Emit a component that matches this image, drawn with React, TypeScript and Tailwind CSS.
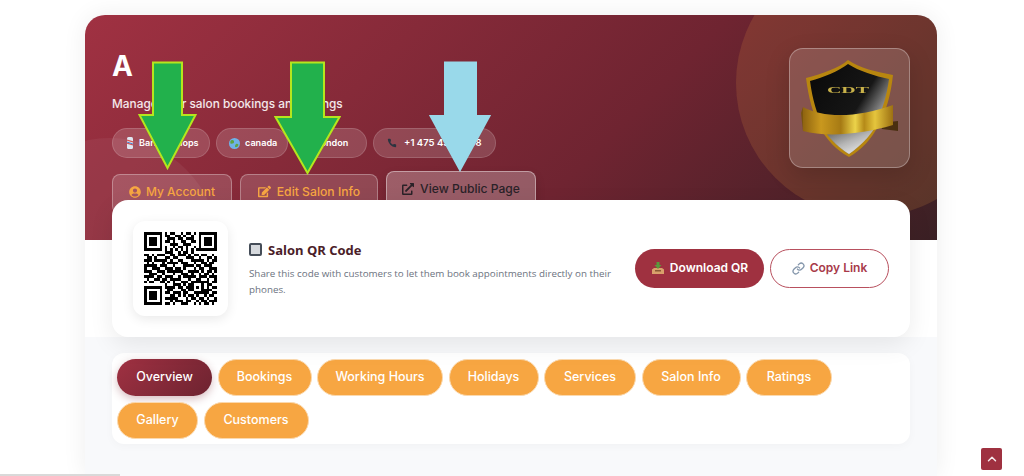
import { FaEdit, FaExternalLinkAlt, FaUserCircle } from 'react-icons/fa';
import { ChevronUp, Link } from 'lucide-react';

const qrRows = [
  '1111111010110010110101111111',
  '1000001011001101001001000001',
  '1011101001110110111001011101',
  '1011101011010011001101011101',
  '1011101000111001110001011101',
  '1000001010010110100101000001',
  '1111111010101010101011111111',
  '0000000011100101101000000000',
  '1101011100110111010110110010',
  '0110100011011000111001001101',
  '1110111110100110001111101011',
  '0101000101111011100100110110',
  '1111101110010001111011011100',
  '1001110011101101000101100111',
  '1110011101111110011110101101',
  '0011100100010011101001011010',
  '1111011011100101111101110111',
  '0100110110111100010011001001',
  '1011001101010011101111111011',
  '0000000010011101011000101100',
  '1111111011110110111010101011',
  '1000001001100011011000111100',
  '1011101011011101100111111011',
  '1011101000110101011010010110',
  '1011101011111000101101101001',
  '1000001000101110110010110111',
  '1111111011010011100101011010',
];

const tabs = [
  { label: 'Overview', width: 'w-[95px]' },
  { label: 'Bookings', width: 'w-[94px]' },
  { label: 'Working Hours', width: 'w-[126px]' },
  { label: 'Holidays', width: 'w-[90px]' },
  { label: 'Services', width: 'w-[92px]' },
  { label: 'Salon Info', width: 'w-[99px]' },
  { label: 'Ratings', width: 'w-[86px]' },
  { label: 'Gallery', width: 'w-[81px]' },
  { label: 'Customers', width: 'w-[105px]' },
];

function QrCode() {
  return (
    <svg width="73" height="73" viewBox="0 0 28 27" preserveAspectRatio="none" shapeRendering="crispEdges">
      {qrRows.map((row, y) =>
        row.split('').map((cell, x) => (cell === '1' ? <rect key={`${x}-${y}`} x={x} y={y} width="1" height="1" fill="#000" /> : null))
      )}
    </svg>
  );
}

function ShieldLogo() {
  return (
    <svg width="119" height="118" viewBox="0 0 119 118" className="blur-[0.5px]">
      <defs>
        <linearGradient id="shieldFace" x1="0.1" y1="0.1" x2="0.95" y2="0.7">
          <stop offset="0" stopColor="#0b0b0b" />
          <stop offset="0.6" stopColor="#161616" />
          <stop offset="0.85" stopColor="#8b8b8b" />
          <stop offset="1" stopColor="#d8d8d8" />
        </linearGradient>
        <linearGradient id="shieldLow" x1="0.1" y1="0" x2="0.75" y2="1">
          <stop offset="0" stopColor="#3a3a3a" />
          <stop offset="0.6" stopColor="#b5b5b5" />
          <stop offset="1" stopColor="#f2f2f2" />
        </linearGradient>
        <linearGradient id="ribbon" x1="0" y1="0" x2="1" y2="0">
          <stop offset="0" stopColor="#8f6410" />
          <stop offset="0.2" stopColor="#c9981e" />
          <stop offset="0.42" stopColor="#a67a14" />
          <stop offset="0.58" stopColor="#ecd34a" />
          <stop offset="0.68" stopColor="#b58a18" />
          <stop offset="0.8" stopColor="#e5c53d" />
          <stop offset="1" stopColor="#9c7012" />
        </linearGradient>
      </defs>
      <path d="M58 11C49 19 31 25 16 29C21 69 34 94 59 108C84 94 99 64 103 26C87 23 69 19 58 11Z" fill="#b8860f" />
      <path d="M58 15C49 22 34 28 20 32C25 69 37 91 59 105C81 91 95 62 99 30C85 27 69 22 58 15Z" fill="url(#shieldFace)" />
      <path d="M36 84L89 71C83 84 73 95 59 105C49 99 42 92 36 84Z" fill="url(#shieldLow)" />
      <text x="58" y="44" textAnchor="middle" fontFamily="'Liberation Serif', serif" fontSize="8" fontWeight="700" fill="#c9b24a" textLength="42" lengthAdjust="spacingAndGlyphs">CDT</text>
      <path d="M90 74L108 72L108 82L92 80Z" fill="#4a2f10" />
      <path d="M13 58C35 70 70 68 103 56L103 76C70 86 35 88 13 82Z" fill="url(#ribbon)" />
      <path d="M13 58L11 64L13 82Z" fill="#7a5510" />
    </svg>
  );
}

function Arrow({ left, top, width, height, shaftLeft, shaftRight, headY, fill, stroke }: { left: string; top: string; width: number; height: number; shaftLeft: number; shaftRight: number; headY: number; fill: string; stroke: string }) {
  const points = `${shaftLeft},1.5 ${shaftRight},1.5 ${shaftRight},${headY} ${width - 1.5},${headY} ${width / 2},${height - 2} 1.5,${headY} ${shaftLeft},${headY}`;
  return (
    <svg width={width} height={height} className={`absolute ${left} ${top}`}>
      <polygon points={points} fill={fill} stroke={stroke} strokeWidth="2" />
    </svg>
  );
}

export default function App() {
  return (
    <div className="relative h-[476px] w-[1024px] overflow-hidden bg-white font-['Inter',sans-serif]">
      <div className="ml-[85px] mt-[15px] h-[461px] w-[852px] overflow-hidden rounded-t-[20px] bg-[#f8f9fb] shadow-[0_0_24px_rgba(0,0,0,0.07)]">
        <div className="relative h-[322px] bg-white">
          <header className="relative h-[225px] overflow-hidden bg-[linear-gradient(135deg,#a03142_0%,#6f2431_60%,#3a2024_100%)] px-[27px] pt-[36px]">
            <div className="absolute right-[-67px] top-[-66px] h-[268px] w-[268px] rounded-full bg-[#f7a642]/15" />
            <div className="absolute left-[-83px] top-[123px] h-[216px] w-[216px] rounded-full bg-white/5" />
            <div className="relative flex justify-between">
              <div>
                <h1 className="text-[28px] font-bold leading-[30px] text-white">A</h1>
                <p className="mt-[13px] text-[11.850px] font-medium leading-[20px] text-white/90">Manage your salon bookings and listings</p>
                <div className="mt-[14px] flex">
                  <span className="flex h-[30px] w-[98px] items-center gap-[6px] rounded-full border border-white/15 bg-white/15 pl-[14px] text-[9.100px] font-semibold text-white">
                    <svg width="6" height="12" viewBox="0 0 6 12"><rect width="6" height="12" rx="1.5" fill="#dfe7f2" /><path d="M0 3L6 5M0 6L6 8" stroke="#d9534f" strokeWidth="1.2" /><path d="M0 5L6 7" stroke="#4a7fd0" strokeWidth="1" /></svg>
                    Barber Shops
                  </span>
                  <span className="ml-[6px] flex h-[30px] w-[72px] items-center gap-[5px] rounded-full border border-white/15 bg-white/15 pl-[12px] text-[9.100px] font-semibold text-white">
                    <svg width="11" height="11" viewBox="0 0 11 11"><circle cx="5.5" cy="5.5" r="5.5" fill="#6fb2e8" /><path d="M2 2.500C4 1.500 5.500 2.500 5 4.500C4.500 6 3 5 2 6C1 5 1 3.500 2 2.500ZM7 6C9 5.500 10 6.500 9 8C8 9.500 6 9.500 6 8.500C6 7.500 6.500 6.500 7 6Z" fill="#5fa345" /></svg>
                    canada
                  </span>
                  <span className="ml-[7px] flex h-[30px] w-[72px] items-center rounded-full border border-white/15 bg-white/15 pl-[22px] text-[9.100px] font-semibold text-white">london</span>
                  <span className="ml-[6px] flex h-[30px] w-[123px] items-center gap-[7px] rounded-full border border-white/15 bg-white/15 pl-[13px] text-[9.500px] font-semibold text-white">
                    <svg width="10" height="10" viewBox="0 0 24 24"><path d="M22 17v3a2 2 0 0 1-2.200 2A20 20 0 0 1 2 4.200 2 2 0 0 1 4 2h3a2 2 0 0 1 2 1.700l.5 3a2 2 0 0 1-.6 1.800L7.600 9.800a16 16 0 0 0 6.600 6.600l1.300-1.300a2 2 0 0 1 1.800-.6l3 .5A2 2 0 0 1 22 17z" fill="#2b3440" /></svg>
                    +1 475 455 5858
                  </span>
                </div>
                <div className="mt-[13px] flex items-start gap-[8px]">
                  <a className="mt-[3px] flex h-[40px] w-[120px] items-start justify-center gap-[5px] rounded-[8px] border border-white/30 bg-white/15 pt-[9px] text-[12px] font-medium leading-[15px] text-[#f7a642]">
                    <FaUserCircle className="mt-[1.500px] h-[12px] w-[12px]" /> My Account
                  </a>
                  <a className="mt-[3px] flex h-[40px] w-[138px] items-start justify-center gap-[6px] rounded-[8px] border border-white/30 bg-white/15 pt-[9px] text-[12.200px] font-medium leading-[15px] text-[#f7a642]">
                    <FaEdit className="mt-[1px] h-[13px] w-[13px]" /> Edit Salon Info
                  </a>
                  <a className="flex h-[40px] w-[150px] items-start justify-center gap-[6px] rounded-[8px] border border-white/40 bg-white/25 pt-[9px] text-[12.100px] font-medium leading-[15px] text-[#2a2228] shadow-[0_4px_10px_rgba(0,0,0,0.15)]">
                    <FaExternalLinkAlt className="mt-[1.500px] h-[12px] w-[12px]" /> View Public Page
                  </a>
                </div>
              </div>
              <div className="mt-[-3px] flex h-[120px] w-[121px] items-center justify-center rounded-[14px] border border-white/30 bg-white/15 shadow-[0_8px_24px_rgba(0,0,0,0.15)]">
                <ShieldLogo />
              </div>
            </div>
          </header>
          <section className="relative mx-[27px] mt-[-40px] flex h-[137px] items-center rounded-[16px] bg-white pl-[21px] pr-[21px] shadow-[0_8px_24px_rgba(0,0,0,0.08)]">
            <div className="flex h-[95px] w-[95px] shrink-0 items-center justify-center rounded-[12px] bg-white shadow-[0_3px_12px_rgba(0,0,0,0.09)]">
              <QrCode />
            </div>
            <div className="ml-[21px] w-[372px] shrink-0">
              <h2 className="flex items-center gap-[6px] font-['Open_Sans',sans-serif] text-[13px] font-bold leading-[20px] text-[#4a2028]">
                <span className="h-[13px] w-[13px] rounded-[2px] border-2 border-[#454d58] bg-[#d6d9dd]" />
                Salon QR Code
              </h2>
              <p className="mt-[6px] font-['Open_Sans',sans-serif] text-[9.800px] leading-[16px] text-[#6b7280]">
                Share this code with customers to let them book appointments directly on their phones.
              </p>
            </div>
            <div className="ml-[14px] mt-[-1px] flex gap-[6px]">
              <button className="flex h-[39px] w-[129px] items-center justify-center gap-[5px] rounded-full bg-[#9f3140] text-[12px] font-semibold text-white">
                <svg width="14" height="14" viewBox="0 0 14 14"><path d="M1 8.500L3 7H11L13 8.500V13H1Z" fill="#d9a06b" /><path d="M4 9H10V10.500H4Z" fill="#8a5a35" /><path d="M5.500 1H8.500V4H10.500L7 8L3.500 4H5.500Z" fill="#5a9a3c" /></svg>
                Download QR
              </button>
              <button className="flex h-[39px] w-[119px] items-center justify-center gap-[5px] rounded-full border-[1.5px] border-[#b8505e] bg-white text-[12px] font-semibold text-[#a83a4a]">
                <Link className="h-[13px] w-[13px] text-[#8496ab]" strokeWidth={2.4} />
                Copy Link
              </button>
            </div>
          </section>
        </div>
        <nav className="mx-[27px] mt-[16px] flex h-[91px] flex-wrap content-start gap-x-[5.500px] gap-y-[6px] rounded-[12px] bg-white px-[5px] py-[5.500px] shadow-[0_2px_10px_rgba(0,0,0,0.03)]">
          {tabs.map((tab) => (
            <button
              key={tab.label}
              className={`${tab.width} h-[37px] rounded-full text-[12.500px] font-medium text-white ${
                tab.label === 'Overview'
                  ? 'bg-[linear-gradient(135deg,#a03142,#6d2330)] shadow-[0_3px_8px_rgba(122,35,48,0.3)]'
                  : 'border border-[#fbd9ae] bg-[#f7a642]'
              }`}
            >
              {tab.label}
            </button>
          ))}
        </nav>
      </div>

      <Arrow left="left-[138px]" top="top-[61px]" width={59} height={109} shaftLeft={15} shaftRight={44} headY={54} fill="#22b14c" stroke="#b5e61d" />
      <Arrow left="left-[274px]" top="top-[61px]" width={67} height={114} shaftLeft={17} shaftRight={50} headY={56} fill="#22b14c" stroke="#b5e61d" />
      <Arrow left="left-[429px]" top="top-[61px]" width={62} height={111} shaftLeft={16} shaftRight={47} headY={55} fill="#99d9ea" stroke="#99d9ea" />

      <div className="absolute bottom-0 left-0 h-[2px] w-[120px] bg-[#d9d9d9]" />
      <a className="absolute bottom-[6px] right-[22px] flex h-[22px] w-[21px] items-center justify-center rounded-[2px] bg-[#9f3140] text-white/90">
        <ChevronUp className="h-[14px] w-[14px]" strokeWidth={2.5} />
      </a>
    </div>
  );
}
